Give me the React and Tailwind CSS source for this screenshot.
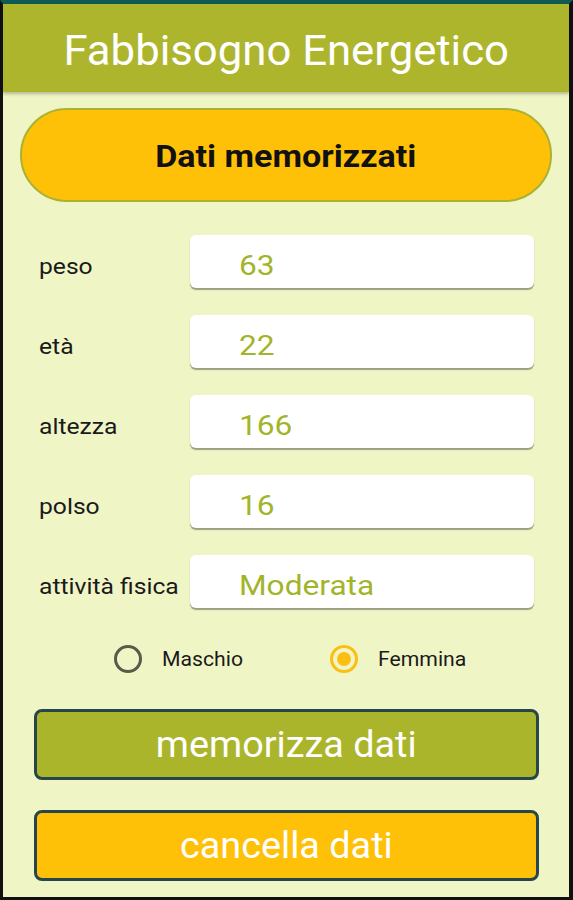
const fields = [
  { label: 'peso', value: '63' },
  { label: 'età', value: '22' },
  { label: 'altezza', value: '166' },
  { label: 'polso', value: '16' },
  { label: 'attività fisica', value: 'Moderata' },
];

function Radio({ label, checked }) {
  return (
    <div className="flex items-center gap-[20px]">
      <span
        className={
          'flex h-[28px] w-[28px] items-center justify-center rounded-full border-[3px] ' +
          (checked ? 'border-[#fbbf14]' : 'border-[#5a5a4a]')
        }
      >
        {checked && <span className="h-[14px] w-[14px] rounded-full bg-[#fbbf14]" />}
      </span>
      <span className="inline-block origin-left scale-x-[1.06] text-[20px] text-[#1a1a1a]">{label}</span>
    </div>
  );
}

export default function App() {
  return (
    <div
      className="flex h-[900px] w-[573px] flex-col border-b-[3px] border-l-[3px] border-r-[4px] border-t-[4px] border-b-[#111] border-l-[#111] border-r-[#111] border-t-[#0f5a52] bg-[#f0f5c6]"
      style={{ fontFamily: 'Roboto, "Noto Sans", sans-serif' }}
    >
      <header className="flex h-[88px] items-center justify-center bg-[#adb52d] pt-[4px] shadow-[0_2px_3px_rgba(0,0,0,0.25)]">
        <h1 className="inline-block scale-x-[1.04] text-[42px] font-normal text-white">Fabbisogno Energetico</h1>
      </header>

      <div className="mx-[17px] mt-[16px] flex h-[94px] items-center justify-center rounded-full border-2 border-[#a9b232] bg-[#ffc107] pt-[5px]">
        <span className="inline-block scale-x-[1.1] text-[31px] font-bold text-[#111]">Dati memorizzati</span>
      </div>

      <div className="mt-[33px] flex flex-col gap-[27px] pl-[36px] pr-[35px]">
        {fields.map((f) => (
          <div key={f.label} className="flex items-center">
            <span className="w-[151px] pt-[10px] leading-none">
              <span className="inline-block origin-left scale-x-[1.12] whitespace-nowrap text-[22px] text-[#1a1a1a]">
                {f.label}
              </span>
            </span>
            <div className="flex h-[53px] flex-1 items-center rounded-[6px] bg-white pl-[49px] pt-[8px] shadow-[0_2px_1px_rgba(0,0,0,0.35)]">
              <span className="inline-block origin-left scale-x-[1.13] text-[28px] text-[#a2b42a]">{f.value}</span>
            </div>
          </div>
        ))}
      </div>

      <div className="mt-[36px] flex pl-[111px]">
        <div className="w-[216px]">
          <Radio label="Maschio" />
        </div>
        <Radio label="Femmina" checked />
      </div>

      <div className="mt-[35px] flex flex-col gap-[30px] pl-[31px] pr-[30px]">
        <button className="flex h-[71px] items-center justify-center rounded-[8px] border-[3px] border-[#27464a] bg-[#abb52c] text-white">
          <span className="inline-block scale-x-[1.05] text-[36px]">memorizza dati</span>
        </button>
        <button className="flex h-[71px] items-center justify-center rounded-[8px] border-[3px] border-[#27464a] bg-[#ffc107] text-white">
          <span className="inline-block scale-x-[1.05] text-[36px]">cancella dati</span>
        </button>
      </div>
    </div>
  );
}
